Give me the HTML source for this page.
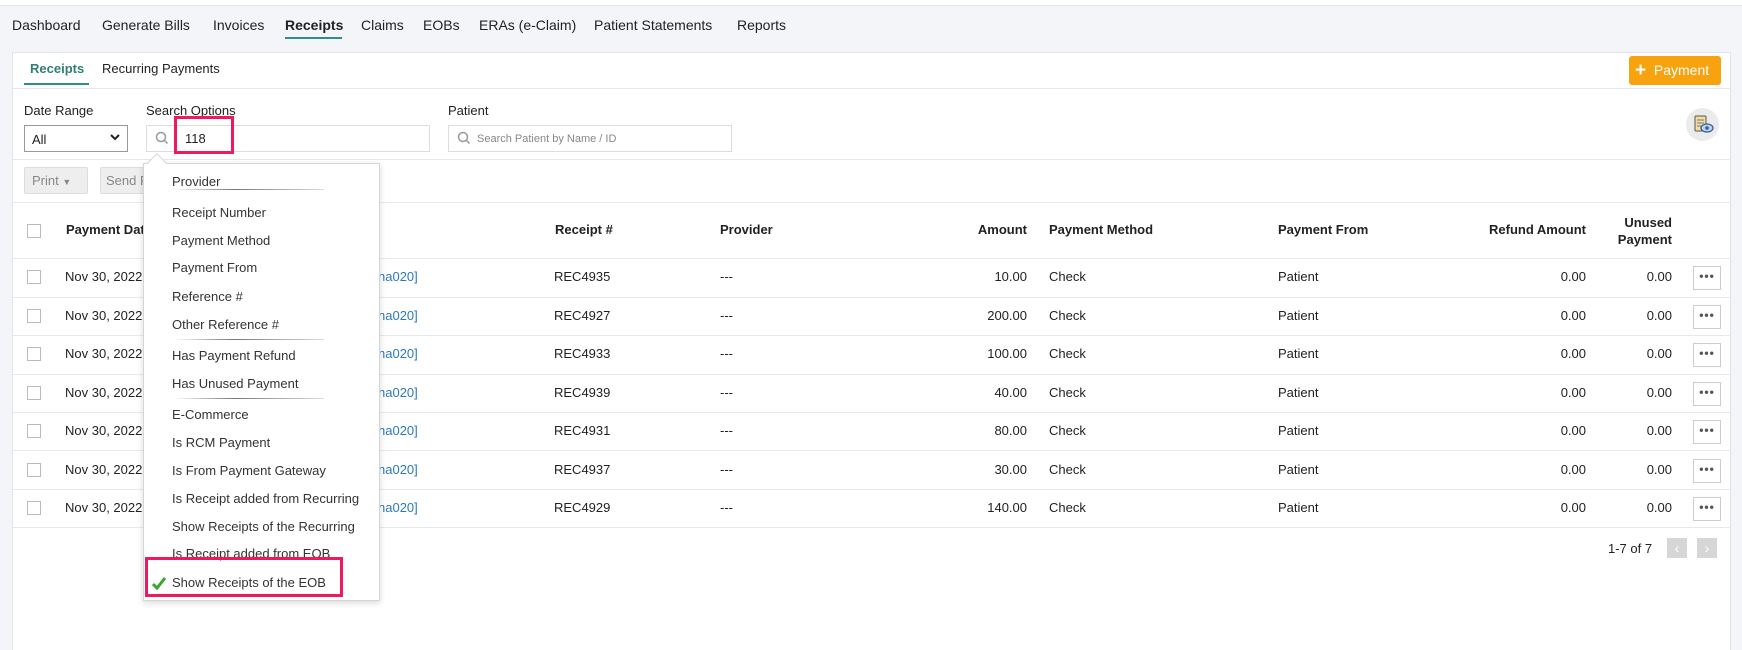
<!DOCTYPE html>
<html style="width:1742px;height:650px;overflow:hidden"><head><meta charset="utf-8"><style>
*{box-sizing:border-box;margin:0;padding:0}
html,body{width:1742px;height:650px;overflow:hidden}
body{background:#f4f5f8;font-family:"Liberation Sans",sans-serif;color:#222;position:relative;font-size:13px}
.a{position:absolute;white-space:nowrap}
.topbar{position:absolute;left:0;top:0;width:1742px;height:6px;background:#fff;border-bottom:1px solid #e4e6ea}
.nav{font-size:14px;color:#222;top:17px}
.card{position:absolute;left:12px;top:52px;width:1719px;height:598px;background:#fff;border:1px solid #e2e4e8;border-bottom:none}
.hl{position:absolute;height:1px;background:#e6e8eb}
.inp{position:absolute;border:1px solid #ddd;background:#fff}
.th{font-weight:bold;font-size:13px;color:#222}
.cb{position:absolute;width:14px;height:14px;border:1px solid #bbb;background:#fff}
.dots{position:absolute;width:28px;height:24px;border:1px solid #ccc;background:#fff;text-align:center;font-size:12px;line-height:18px;color:#555;font-weight:bold;letter-spacing:1px}
.dd{position:absolute;left:143px;top:163px;width:237px;height:438px;background:#fff;border:1px solid #d5d5d5;box-shadow:0 2px 6px rgba(0,0,0,.15)}
.di{position:absolute;left:28px;font-size:13px;color:#333}
.sep{position:absolute;left:30px;width:150px;height:1px;background:linear-gradient(90deg,#fff,#777 40%,#ddd)}
</style></head><body>
<div class="topbar"></div>
<div class="a nav" style="left:12px">Dashboard</div>
<div class="a nav" style="left:102px">Generate Bills</div>
<div class="a nav" style="left:213px">Invoices</div>
<div class="a nav" style="left:285px;font-weight:bold">Receipts</div>
<div class="a" style="left:285px;top:37px;width:57px;height:2px;background:#2f8f86"></div>
<div class="a nav" style="left:361px">Claims</div>
<div class="a nav" style="left:423px">EOBs</div>
<div class="a nav" style="left:479px">ERAs (e-Claim)</div>
<div class="a nav" style="left:594px">Patient Statements</div>
<div class="a nav" style="left:737px">Reports</div>

<div class="card"></div>
<div class="a" style="left:30px;top:61px;font-size:13px;color:#2f7f78;font-weight:bold">Receipts</div>
<div class="a" style="left:24px;top:83px;width:65px;height:2px;background:#2f8f86"></div>
<div class="a" style="left:102px;top:61px;font-size:13px;color:#222">Recurring Payments</div>
<div class="a" style="left:1629px;top:56px;width:92px;height:29px;background:#f7a20f;border-radius:3px;color:#fff;font-size:14px;line-height:29px;padding-left:6px"><span style="font-size:19px;font-weight:bold;vertical-align:-1px">+</span>&nbsp; Payment</div>
<div class="hl" style="left:13px;top:88px;width:1717px"></div>

<div class="a" style="left:24px;top:103px;font-size:13px">Date Range</div>
<div class="a" style="left:146px;top:103px;font-size:13px">Search Options</div>
<div class="a" style="left:448px;top:103px;font-size:13px">Patient</div>
<div class="inp" style="left:24px;top:125px;width:104px;height:27px;border-color:#999"></div>
<div class="a" style="left:32px;top:132px;font-size:13px">All</div>
<svg class="a" style="left:110px;top:134px" width="10" height="8"><path d="M1 1l4 4 4-4" stroke="#222" stroke-width="2" fill="none"/></svg>
<div class="inp" style="left:146px;top:125px;width:284px;height:27px"></div>
<svg class="a" style="left:155px;top:131px" width="14" height="14"><circle cx="6" cy="6" r="4.5" stroke="#999" stroke-width="1.5" fill="none"/><path d="M9.5 9.5l3 3" stroke="#999" stroke-width="1.5"/></svg>
<div class="a" style="left:185px;top:131px;font-size:13px">118</div>
<div class="a" style="left:174px;top:116px;width:60px;height:38px;border:3px solid #f0195b"></div>
<div class="inp" style="left:448px;top:125px;width:284px;height:27px"></div>
<svg class="a" style="left:457px;top:131px" width="14" height="14"><circle cx="6" cy="6" r="4.5" stroke="#999" stroke-width="1.5" fill="none"/><path d="M9.5 9.5l3 3" stroke="#999" stroke-width="1.5"/></svg>
<div class="a" style="left:477px;top:133px;font-size:11px;color:#888">Search Patient by Name / ID</div>
<div class="a" style="left:1686px;top:108px;width:33px;height:33px;border-radius:50%;background:#ebebeb"></div>
<svg class="a" style="left:1693px;top:114px" width="22" height="22"><rect x="2" y="2" width="11" height="15" rx="1" fill="#f3dca0" stroke="#555" stroke-width="1"/><path d="M4 6h7M4 9h7M4 12h4" stroke="#777" stroke-width="1"/><ellipse cx="14" cy="14" rx="6" ry="4" fill="#bcd3ee" stroke="#2f5d93" stroke-width="1.2"/><circle cx="14" cy="14" r="1.8" fill="#2f5d93"/></svg>
<div class="hl" style="left:13px;top:159px;width:1717px"></div>

<div class="a" style="left:24px;top:167px;width:64px;height:27px;background:#eee;border:1px solid #ddd;border-radius:2px;color:#888;font-size:13px;line-height:25px;padding-left:7px">Print <span style="font-size:9px">▼</span></div>
<div class="a" style="left:100px;top:167px;width:60px;height:27px;background:#eee;border:1px solid #ddd;border-radius:2px;color:#888;font-size:13px;line-height:25px;padding-left:5px;overflow:hidden">Send R</div>
<div class="hl" style="left:13px;top:202px;width:1717px"></div>

<div class="cb" style="left:27px;top:224px"></div>
<div class="a th" style="left:66px;top:222px">Payment Date</div>
<div class="a th" style="left:555px;top:222px">Receipt #</div>
<div class="a th" style="left:720px;top:222px">Provider</div>
<div class="a th" style="left:977px;top:222px;width:50px;text-align:right">Amount</div>
<div class="a th" style="left:1049px;top:222px">Payment Method</div>
<div class="a th" style="left:1278px;top:222px">Payment From</div>
<div class="a th" style="left:1486px;top:222px;width:100px;text-align:right">Refund Amount</div>
<div class="a th" style="left:1600px;top:214px;width:72px;text-align:right;line-height:17px;white-space:normal">Unused<br>Payment</div>
<div class="hl" style="left:13px;top:258px;width:1717px"></div>

<div class="cb" style="left:27px;top:270px"></div><div class="a" style="left:65px;top:269px">Nov 30, 2022</div><div class="a" style="left:378px;top:269px;color:#2a78c2">ha020]</div><div class="a" style="left:554px;top:269px">REC4935</div><div class="a" style="left:720px;top:269px">---</div><div class="a" style="left:927px;top:269px;width:100px;text-align:right">10.00</div><div class="a" style="left:1049px;top:269px">Check</div><div class="a" style="left:1278px;top:269px">Patient</div><div class="a" style="left:1486px;top:269px;width:100px;text-align:right">0.00</div><div class="a" style="left:1572px;top:269px;width:100px;text-align:right">0.00</div><div class="dots" style="left:1693px;top:266px">•••</div><div class="hl" style="left:13px;top:297px;width:1717px"></div>
<div class="cb" style="left:27px;top:309px"></div><div class="a" style="left:65px;top:308px">Nov 30, 2022</div><div class="a" style="left:378px;top:308px;color:#2a78c2">ha020]</div><div class="a" style="left:554px;top:308px">REC4927</div><div class="a" style="left:720px;top:308px">---</div><div class="a" style="left:927px;top:308px;width:100px;text-align:right">200.00</div><div class="a" style="left:1049px;top:308px">Check</div><div class="a" style="left:1278px;top:308px">Patient</div><div class="a" style="left:1486px;top:308px;width:100px;text-align:right">0.00</div><div class="a" style="left:1572px;top:308px;width:100px;text-align:right">0.00</div><div class="dots" style="left:1693px;top:305px">•••</div><div class="hl" style="left:13px;top:335px;width:1717px"></div>
<div class="cb" style="left:27px;top:347px"></div><div class="a" style="left:65px;top:346px">Nov 30, 2022</div><div class="a" style="left:378px;top:346px;color:#2a78c2">ha020]</div><div class="a" style="left:554px;top:346px">REC4933</div><div class="a" style="left:720px;top:346px">---</div><div class="a" style="left:927px;top:346px;width:100px;text-align:right">100.00</div><div class="a" style="left:1049px;top:346px">Check</div><div class="a" style="left:1278px;top:346px">Patient</div><div class="a" style="left:1486px;top:346px;width:100px;text-align:right">0.00</div><div class="a" style="left:1572px;top:346px;width:100px;text-align:right">0.00</div><div class="dots" style="left:1693px;top:343px">•••</div><div class="hl" style="left:13px;top:374px;width:1717px"></div>
<div class="cb" style="left:27px;top:386px"></div><div class="a" style="left:65px;top:385px">Nov 30, 2022</div><div class="a" style="left:378px;top:385px;color:#2a78c2">ha020]</div><div class="a" style="left:554px;top:385px">REC4939</div><div class="a" style="left:720px;top:385px">---</div><div class="a" style="left:927px;top:385px;width:100px;text-align:right">40.00</div><div class="a" style="left:1049px;top:385px">Check</div><div class="a" style="left:1278px;top:385px">Patient</div><div class="a" style="left:1486px;top:385px;width:100px;text-align:right">0.00</div><div class="a" style="left:1572px;top:385px;width:100px;text-align:right">0.00</div><div class="dots" style="left:1693px;top:382px">•••</div><div class="hl" style="left:13px;top:412px;width:1717px"></div>
<div class="cb" style="left:27px;top:424px"></div><div class="a" style="left:65px;top:423px">Nov 30, 2022</div><div class="a" style="left:378px;top:423px;color:#2a78c2">ha020]</div><div class="a" style="left:554px;top:423px">REC4931</div><div class="a" style="left:720px;top:423px">---</div><div class="a" style="left:927px;top:423px;width:100px;text-align:right">80.00</div><div class="a" style="left:1049px;top:423px">Check</div><div class="a" style="left:1278px;top:423px">Patient</div><div class="a" style="left:1486px;top:423px;width:100px;text-align:right">0.00</div><div class="a" style="left:1572px;top:423px;width:100px;text-align:right">0.00</div><div class="dots" style="left:1693px;top:420px">•••</div><div class="hl" style="left:13px;top:450px;width:1717px"></div>
<div class="cb" style="left:27px;top:463px"></div><div class="a" style="left:65px;top:462px">Nov 30, 2022</div><div class="a" style="left:378px;top:462px;color:#2a78c2">ha020]</div><div class="a" style="left:554px;top:462px">REC4937</div><div class="a" style="left:720px;top:462px">---</div><div class="a" style="left:927px;top:462px;width:100px;text-align:right">30.00</div><div class="a" style="left:1049px;top:462px">Check</div><div class="a" style="left:1278px;top:462px">Patient</div><div class="a" style="left:1486px;top:462px;width:100px;text-align:right">0.00</div><div class="a" style="left:1572px;top:462px;width:100px;text-align:right">0.00</div><div class="dots" style="left:1693px;top:459px">•••</div><div class="hl" style="left:13px;top:489px;width:1717px"></div>
<div class="cb" style="left:27px;top:501px"></div><div class="a" style="left:65px;top:500px">Nov 30, 2022</div><div class="a" style="left:378px;top:500px;color:#2a78c2">ha020]</div><div class="a" style="left:554px;top:500px">REC4929</div><div class="a" style="left:720px;top:500px">---</div><div class="a" style="left:927px;top:500px;width:100px;text-align:right">140.00</div><div class="a" style="left:1049px;top:500px">Check</div><div class="a" style="left:1278px;top:500px">Patient</div><div class="a" style="left:1486px;top:500px;width:100px;text-align:right">0.00</div><div class="a" style="left:1572px;top:500px;width:100px;text-align:right">0.00</div><div class="dots" style="left:1693px;top:497px">•••</div><div class="hl" style="left:13px;top:527px;width:1717px"></div>

<div class="a" style="left:1608px;top:541px;font-size:13px">1-7 of 7</div>
<div class="a" style="left:1667px;top:538px;width:20px;height:20px;background:#d6d6d6;color:#fff;text-align:center;line-height:20px;font-size:14px">&lsaquo;</div>
<div class="a" style="left:1697px;top:538px;width:20px;height:20px;background:#d6d6d6;color:#fff;text-align:center;line-height:20px;font-size:14px">&rsaquo;</div>

<div class="dd">
<div class="di" style="top:10px">Provider</div>
<div class="sep" style="top:25px"></div>
<div class="di" style="top:41px">Receipt Number</div>
<div class="di" style="top:69px">Payment Method</div>
<div class="di" style="top:96px">Payment From</div>
<div class="di" style="top:125px">Reference #</div>
<div class="di" style="top:153px">Other Reference #</div>
<div class="sep" style="top:175px"></div>
<div class="di" style="top:184px">Has Payment Refund</div>
<div class="di" style="top:212px">Has Unused Payment</div>
<div class="sep" style="top:234px"></div>
<div class="di" style="top:243px">E-Commerce</div>
<div class="di" style="top:271px">Is RCM Payment</div>
<div class="di" style="top:299px">Is From Payment Gateway</div>
<div class="di" style="top:327px">Is Receipt added from Recurring</div>
<div class="di" style="top:355px">Show Receipts of the Recurring</div>
<div class="di" style="top:382px">Is Receipt added from EOB</div>
<div class="di" style="top:411px">Show Receipts of the EOB</div>
<svg style="position:absolute;left:8px;top:412px" width="14" height="14"><path d="M1 8l4 4 8-10" stroke="#3aa52e" stroke-width="3" fill="none"/></svg>
</div>
<div class="a" style="left:145px;top:557px;width:198px;height:40px;border:3px solid #f0195b"></div>
<div class="a" style="left:150px;top:156px;width:14px;height:14px;background:#fff;border-left:1px solid #d5d5d5;border-top:1px solid #d5d5d5;transform:rotate(45deg)"></div>
</body></html>
